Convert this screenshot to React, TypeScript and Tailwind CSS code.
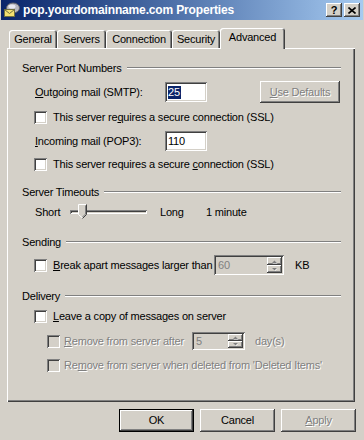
import React from "react";

const raised =
  "shadow-[inset_-1px_-1px_#404040,inset_1px_1px_#ffffff,inset_-2px_-2px_#808080,inset_2px_2px_#d4d0c8]";
const sunken =
  "shadow-[inset_1px_1px_#808080,inset_-1px_-1px_#ffffff,inset_2px_2px_#404040,inset_-2px_-2px_#d4d0c8]";
const disabledText = "text-[#808080] [text-shadow:1px_1px_0_#ffffff]";

function U({ children }: { children: React.ReactNode }) {
  return <span className="underline underline-offset-[1px] decoration-1">{children}</span>;
}

function Checkbox({ disabled }: { disabled?: boolean }) {
  return (
    <div
      className={`w-[13px] h-[13px] shrink-0 ${sunken} ${disabled ? "bg-[#d4d0c8]" : "bg-white"}`}
    />
  );
}

function Section({ label, className }: { label: string; className: string }) {
  return (
    <div className={`flex items-center h-[16px] ${className}`}>
      <span className="whitespace-nowrap">{label}</span>
      <div className="flex-1 ml-[5px] mt-[-1px] h-0 border-t border-b border-t-[#808080] border-b-white" />
    </div>
  );
}

function SpinArrow({ up }: { up?: boolean }) {
  return (
    <div className={`flex-1 flex items-center justify-center ${raised}`}>
      <svg width="5" height="3" viewBox="0 0 5 3" className="overflow-visible">
        <polygon
          points={up ? "0.5,3.5 5.5,3.5 3,1" : "0.5,0.5 5.5,0.5 3,3"}
          fill="#ffffff"
        />
        <polygon points={up ? "0,3 5,3 2.5,0.5" : "0,0 5,0 2.5,2.5"} fill="#808080" />
      </svg>
    </div>
  );
}

function Spin({ value, w, h }: { value: string; w: string; h: string }) {
  return (
    <div className={`flex shrink-0 bg-[#d4d0c8] p-[2px] ${sunken} ${w} ${h}`}>
      <div className="flex-1 flex items-center pl-[2px] text-[#808080]">{value}</div>
      <div className="w-[15px] flex flex-col">
        <SpinArrow up />
        <SpinArrow />
      </div>
    </div>
  );
}

function Button({
  children,
  disabled,
  def,
  className = "",
}: {
  children: React.ReactNode;
  disabled?: boolean;
  def?: boolean;
  className?: string;
}) {
  return (
    <div
      className={`flex items-center justify-center shrink-0 ${className} ${
        def ? "border border-black" : ""
      }`}
    >
      <div
        className={`w-full h-full flex items-center justify-center ${raised} ${
          disabled ? disabledText : ""
        }`}
      >
        {children}
      </div>
    </div>
  );
}

function Tab({ label, w, selected }: { label: string; w: string; selected?: boolean }) {
  return (
    <div
      className={`flex items-center justify-center rounded-t-[3px] bg-[#d4d0c8] shadow-[inset_1px_1px_#ffffff,inset_-1px_0_#404040,inset_-2px_0_#808080] ${w} ${
        selected ? "h-[21px] relative z-10 pb-[3px]" : "h-[18px] mb-[1px]"
      }`}
    >
      {label}
    </div>
  );
}

function TitleIcon() {
  return (
    <svg width="17" height="16" viewBox="0 0 17 16">
      <ellipse cx="10" cy="6" rx="6.5" ry="5" fill="#b8b8c0" stroke="#606068" strokeWidth="1" />
      <ellipse cx="9" cy="4.5" rx="3.5" ry="2" fill="#e8e8f0" />
      <rect x="1.5" y="7.5" width="10" height="7" fill="#f4e070" stroke="#707040" strokeWidth="1" />
      <polyline points="1.5,7.5 6.5,11.5 11.5,7.5" fill="none" stroke="#707040" strokeWidth="1" />
    </svg>
  );
}

export default function App() {
  return (
    <div className="w-[364px] h-[440px] bg-[#d4d0c8] overflow-hidden font-['Liberation_Sans',Arial,sans-serif] text-[11px] leading-[13px] tracking-[-0.2px] text-black select-none">
      {/* Title bar */}
      <div className="h-[20px] mx-[1px] flex items-center bg-gradient-to-r from-[#0a246a] to-[#a6caf0]">
        <div className="ml-[2px] w-[17px] h-[16px] flex items-center">
          <TitleIcon />
        </div>
        <span className="ml-[3px] text-white font-bold text-[12px] tracking-[-0.15px] whitespace-nowrap">
          pop.yourdomainname.com Properties
        </span>
        <div className="flex-1" />
        <div className={`w-[16px] h-[14px] flex items-center justify-center bg-[#d4d0c8] ${raised} font-bold text-[11px] leading-none`}>
          ?
        </div>
        <div className={`w-[16px] h-[14px] ml-[2px] mr-[3px] flex items-center justify-center bg-[#d4d0c8] ${raised}`}>
          <svg width="8" height="7" viewBox="0 0 8 7">
            <path d="M0.5 0.5 L7.5 6.5 M7.5 0.5 L0.5 6.5" stroke="#000" strokeWidth="1.6" />
          </svg>
        </div>
      </div>

      {/* Tabs */}
      <div className="flex items-end h-[21px] mt-[8px] pl-[9px]">
        <Tab label="General" w="w-[48px]" />
        <Tab label="Servers" w="w-[49px]" />
        <Tab label="Connection" w="w-[66px]" />
        <Tab label="Security" w="w-[48px]" />
        <Tab label="Advanced" w="w-[65px]" selected />
      </div>

      {/* Panel */}
      <div
        className={`ml-[7px] -mt-[1px] w-[348px] h-[354px] shadow-[inset_1px_1px_#ffffff,inset_-1px_-1px_#404040,inset_-2px_-2px_#808080] pt-[12px] pl-[15px] pr-[14px]`}
      >
        <Section label="Server Port Numbers" className="" />

        <div className="flex items-center h-[22px] mt-[5px] pl-[13px]">
          <span className="w-[130px] shrink-0">
            <U>O</U>utgoing mail (SMTP):
          </span>
          <div className={`w-[42px] h-[20px] bg-white ${sunken} flex items-center pl-[3px] shrink-0`}>
            <span className="bg-[#0a246a] text-white pr-[1px]">25</span>
          </div>
          <Button disabled className="ml-[53px] w-[80px] h-[22px]">
            <span>
              <U>U</U>se Defaults
            </span>
          </Button>
        </div>

        <div className="flex items-center h-[16px] mt-[6px] pl-[12px]">
          <Checkbox />
          <span className="ml-[6px] whitespace-nowrap">
            This server re<U>q</U>uires a secure connection (SSL)
          </span>
        </div>

        <div className="flex items-center h-[22px] mt-[5px] pl-[13px]">
          <span className="w-[130px] shrink-0">
            <U>I</U>ncoming mail (POP3):
          </span>
          <div className={`w-[42px] h-[20px] bg-white ${sunken} flex items-center pl-[3px] shrink-0`}>
            110
          </div>
        </div>

        <div className="flex items-center h-[16px] mt-[4px] pl-[12px]">
          <Checkbox />
          <span className="ml-[6px] whitespace-nowrap">
            This server requires a secure <U>c</U>onnection (SSL)
          </span>
        </div>

        <Section label="Server Timeouts" className="mt-[12px]" />

        <div className="flex items-center h-[20px] mt-[2px] pl-[13px]">
          <span className="w-[35px] shrink-0">Short</span>
          <div className="w-[77px] h-[20px] relative shrink-0 flex items-center">
            <div className="w-full h-[4px] bg-[#d4d0c8] shadow-[inset_1px_1px_#808080,inset_-1px_-1px_#ffffff,inset_2px_2px_#404040]" />
            <svg
              width="9"
              height="15"
              viewBox="0 0 9 15"
              className="absolute left-[8px] top-[2px]"
            >
              <polygon points="0.5,0.5 8.5,0.5 8.5,10.5 4.5,14.5 0.5,10.5" fill="#d4d0c8" />
              <polyline points="4.5,14 0.5,10.5 0.5,0.5 8,0.5" fill="none" stroke="#ffffff" strokeWidth="1" />
              <polyline points="8.5,0.5 8.5,10.5 4.5,14.5" fill="none" stroke="#404040" strokeWidth="1" />
              <polyline points="7.5,1.5 7.5,10 4.5,13" fill="none" stroke="#808080" strokeWidth="1" />
            </svg>
          </div>
          <span className="ml-[13px] w-[46px] shrink-0">Long</span>
          <span>1 minute</span>
        </div>

        <Section label="Sending" className="mt-[12px]" />

        <div className="flex items-center h-[22px] mt-[4px] pl-[12px]">
          <Checkbox />
          <span className="ml-[6px] w-[161px] shrink-0 whitespace-nowrap">
            <U>B</U>reak apart messages larger than
          </span>
          <Spin value="60" w="w-[70px]" h="h-[20px]" />
          <span className="ml-[11px]">KB</span>
        </div>

        <Section label="Delivery" className="mt-[12px]" />

        <div className="flex items-center h-[16px] mt-[4px] pl-[12px]">
          <Checkbox />
          <span className="ml-[6px] whitespace-nowrap">
            <U>L</U>eave a copy of messages on server
          </span>
        </div>

        <div className="flex items-center h-[20px] mt-[7px] pl-[25px]">
          <Checkbox disabled />
          <span className={`ml-[4px] w-[128px] shrink-0 whitespace-nowrap ${disabledText}`}>
            <U>R</U>emove from server after
          </span>
          <Spin value="5" w="w-[53px]" h="h-[18px]" />
          <span className={`ml-[10px] ${disabledText}`}>day(s)</span>
        </div>

        <div className="flex items-center h-[16px] mt-[6px] pl-[25px]">
          <Checkbox disabled />
          <span className={`ml-[4px] whitespace-nowrap ${disabledText}`}>
            Re<U>m</U>ove from server when deleted from 'Deleted Items'
          </span>
        </div>
      </div>

      {/* Bottom buttons */}
      <div className="flex justify-end gap-[6px] mt-[7px] pr-[8px]">
        <Button def className="w-[75px] h-[23px]">
          OK
        </Button>
        <Button className="w-[75px] h-[23px]">Cancel</Button>
        <Button disabled className="w-[75px] h-[23px]">
          <span>
            <U>A</U>pply
          </span>
        </Button>
      </div>
    </div>
  );
}
